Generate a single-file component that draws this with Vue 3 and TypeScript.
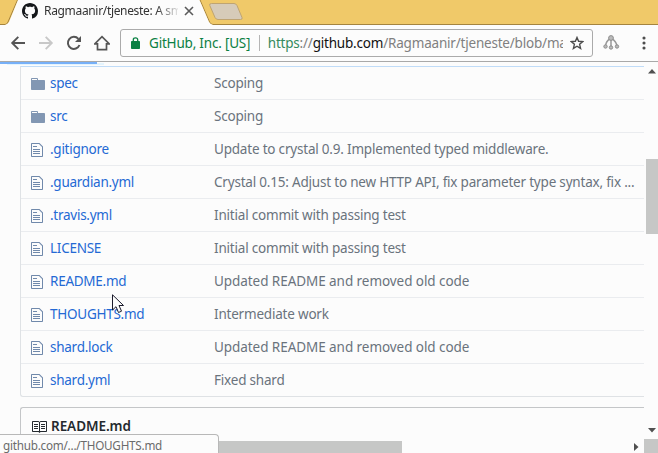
<script setup lang="ts">
interface Entry {
  name: string
  kind: 'dir' | 'file'
  message: string
}

const entries: Entry[] = [
  { name: 'spec', kind: 'dir', message: 'Scoping' },
  { name: 'src', kind: 'dir', message: 'Scoping' },
  { name: '.gitignore', kind: 'file', message: 'Update to crystal 0.9. Implemented typed middleware.' },
  { name: '.guardian.yml', kind: 'file', message: 'Crystal 0.15: Adjust to new HTTP API, fix parameter type syntax, fix ...' },
  { name: '.travis.yml', kind: 'file', message: 'Initial commit with passing test' },
  { name: 'LICENSE', kind: 'file', message: 'Initial commit with passing test' },
  { name: 'README.md', kind: 'file', message: 'Updated README and removed old code' },
  { name: 'THOUGHTS.md', kind: 'file', message: 'Intermediate work' },
  { name: 'shard.lock', kind: 'file', message: 'Updated README and removed old code' },
  { name: 'shard.yml', kind: 'file', message: 'Fixed shard' },
]
</script>

<template>
  <div class="browser">
    <header class="tabstrip">
      <svg class="tab-shape" width="658" height="25" viewBox="0 0 658 25">
        <path d="M0 24.500H5Q7 24.500 8 22L17.500 0H200L209.500 22Q210.500 24.500 213 24.500H658" fill="none" stroke="#a5843f" />
        <path d="M5 25Q8 24 9 22L18 0H199.500L209 22Q210 24 213 25Z" fill="#fcfcfc" />
        <path d="M211.500 3.500H234Q236 3.500 237 5.500L242 17.500Q242.800 19.500 240.500 19.500H218Q216 19.500 215 17.500L209.800 5.500Q209 3.500 211.500 3.500Z" fill="#d6cbb9" stroke="#bfa471" />
      </svg>
      <div class="tab">
        <svg class="favicon" width="16" height="16" viewBox="0 0 16 16"><path fill="#15181b" d="M8 0C3.580 0 0 3.580 0 8c0 3.540 2.290 6.530 5.470 7.590.4.070.55-.17.55-.38 0-.19-.01-.82-.01-1.490-2.010.37-2.530-.49-2.690-.94-.09-.23-.48-.94-.82-1.130-.28-.15-.68-.52-.01-.53.63-.01 1.080.58 1.230.82.72 1.210 1.870.87 2.330.66.070-.52.28-.87.51-1.070-1.780-.2-3.640-.89-3.640-3.950 0-.87.31-1.590.82-2.150-.08-.2-.36-1.020.08-2.120 0 0 .67-.21 2.200.82.64-.18 1.320-.27 2-.27s1.360.09 2 .27c1.530-1.040 2.200-.82 2.200-.82.44 1.100.16 1.920.08 2.120.51.56.82 1.270.82 2.150 0 3.070-1.870 3.750-3.650 3.950.29.25.54.73.54 1.480 0 1.070-.01 1.930-.01 2.200 0 .21.15.46.55.38A8.013 8.013 0 0 0 16 8c0-4.420-3.580-8-8-8z" /></svg>
        <span class="tab-title">Ragmaanir/tjeneste: A sm</span>
        <svg class="close" width="10" height="10" viewBox="0 0 10 10"><path d="M1 1L9 9M9 1L1 9" stroke="#5a5a5a" stroke-width="1.600" /></svg>
      </div>
    </header>

    <nav class="toolbar">
      <svg class="nav-icon" width="16" height="16" viewBox="0 0 16 16"><path d="M15 8H2.500M8.300 1.800L2.200 8L8.300 14.200" fill="none" stroke="#555" stroke-width="1.900" /></svg>
      <svg class="nav-icon" width="16" height="16" viewBox="0 0 16 16"><path d="M1 8H13.500M7.700 1.800L13.800 8L7.700 14.200" fill="none" stroke="#c8c8c8" stroke-width="1.900" /></svg>
      <svg class="nav-icon" width="16" height="16" viewBox="0 0 16 16"><path d="M13.500 10A6 6 0 1 1 12.400 3.900" fill="none" stroke="#555" stroke-width="2" /><path d="M15 1V7H9Z" fill="#555" /></svg>
      <svg class="nav-icon" width="16" height="16" viewBox="0 0 16 16"><path d="M.700 8.900H3.500V14.700H12.500V8.900H15.300L8 1.600Z" fill="none" stroke="#555" stroke-width="1.700" /></svg>
      <div class="omnibox">
        <svg class="lock" width="9" height="12" viewBox="0 0 9 12"><path d="M.500 4.500H8.500V11.500H.500Z" fill="#0b8043" stroke="#0b8043" stroke-linejoin="round" /><path d="M2.300 5V2.700Q2.300.8 4.500.8T6.700 2.700V5" fill="none" stroke="#0b8043" stroke-width="1.300" /></svg>
        <span class="issuer">GitHub, Inc. [US]</span>
        <span class="divider"></span>
        <span class="url"><span class="scheme">https</span>://<span class="host">github.com</span>/Ragmaanir/tjeneste/blob/ma</span>
        <svg class="star" width="14" height="14" viewBox="0 0 14 14"><path d="M7 1.500L8.600 5.300L12.800 5.600L9.600 8.300L10.600 12.400L7 10.200L3.400 12.400L4.400 8.300L1.200 5.600L5.400 5.300Z" fill="none" stroke="#4c4c4c" stroke-width="1.400" /></svg>
      </div>
      <svg class="extension" width="17" height="15" viewBox="0 0 17 15">
        <path d="M8 3V12M7 4Q3 6 2.500 11M9 4Q13 6 14 11" fill="none" stroke="#999" stroke-width="1.500" />
        <g fill="#bbb" stroke="#8e8e8e"><circle cx="8" cy="3" r="2.400" /><circle cx="2.500" cy="11.500" r="1.700" /><circle cx="8" cy="12.500" r="1.700" /><circle cx="14" cy="11.500" r="1.700" /></g>
      </svg>
      <svg class="menu" width="4" height="14" viewBox="0 0 4 14"><g fill="#4d4d4d"><circle cx="2" cy="2" r="1.550" /><circle cx="2" cy="7" r="1.550" /><circle cx="2" cy="12" r="1.550" /></g></svg>
    </nav>

    <div class="content">
      <main class="page">
        <section class="files">
          <div v-for="entry in entries" :key="entry.name" class="row">
            <span class="icon">
              <svg v-if="entry.kind === 'dir'" width="14" height="16" viewBox="0 0 14 16"><path fill="#8297b3" d="M13 4H7V3c0-.66-.31-1-1-1H1c-.55 0-1 .45-1 1v10c0 .55.45 1 1 1h12c.55 0 1-.45 1-1V5c0-.55-.45-1-1-1zM6 4H1V3h5v1z" /></svg>
              <svg v-else width="12" height="16" viewBox="0 0 12 16"><path fill="#7089ab" d="M6 5H2V4h4v1zM2 8h7V7H2v1zm0 2h7V9H2v1zm0 2h7v-1H2v1zm10-7.500V14c0 .55-.45 1-1 1H1c-.55 0-1-.45-1-1V2c0-.55.45-1 1-1h7.500L12 4.500zM11 5L8 2H1v12h10V5z" /></svg>
            </span>
            <span class="name">{{ entry.name }}</span>
            <span class="message" :class="{ wide: entry.message.includes('README') }">{{ entry.message }}</span>
          </div>
        </section>
        <section class="readme">
          <svg width="16" height="16" viewBox="0 0 16 16"><path fill="#24292e" d="M3 5h4v1H3V5zm0 3h4V7H3v1zm0 2h4V9H3v1zm11-5h-4v1h4V5zm0 2h-4v1h4V7zm0 2h-4v1h4V9zm2-6v9c0 .55-.45 1-1 1H9.500l-1 1-1-1H2c-.55 0-1-.45-1-1V3c0-.55.45-1 1-1h5.500l1 1 1-1H15c.55 0 1 .45 1 1zm-8 .5L7.500 3H2v9h6V3.500zm7-.5H9.500l-.5.5V12h6V3z" /></svg>
          <h3>README.md</h3>
        </section>
      </main>
      <aside class="vscroll">
        <svg width="8" height="5" viewBox="0 0 8 5"><path d="M4 0L8 4.500H0Z" fill="#505050" /></svg>
        <div class="vthumb"></div>
        <svg class="down" width="8" height="5" viewBox="0 0 8 5"><path d="M4 4.500L8 0H0Z" fill="#505050" /></svg>
      </aside>
      <div class="progress"></div>
      <div class="hscroll">
        <div class="hthumb"></div>
        <svg class="right" width="5" height="8" viewBox="0 0 5 8"><path d="M4.500 4L0 0V8Z" fill="#505050" /></svg>
        <div class="corner"></div>
      </div>
      <div class="status">github.com/.../THOUGHTS.md</div>
    </div>

    <svg class="cursor" width="13" height="20" viewBox="0 0 13 20"><path d="M.500.800V16L4 12.700L6.500 18.500L9.500 17.200L7 11.500H11.500Z" fill="#fcfcfc" stroke="#1b1b2c" stroke-width="1" /></svg>
  </div>
</template>

<style>
body {
  margin: 0;
  overflow: hidden;
}
</style>

<style scoped>
.browser {
  position: relative;
  display: flex;
  flex-direction: column;
  width: 658px;
  height: 453px;
  overflow: hidden;
  background: #fcfcfc;
  font-family: "Noto Sans", "Open Sans", sans-serif;
  font-size: 13.5px;
  letter-spacing: -0.2px;
  white-space: nowrap;
}
svg {
  display: block;
  flex: none;
}
.tabstrip {
  position: relative;
  flex: none;
  height: 25px;
  background: #f0c969;
}
.tab-shape {
  position: absolute;
  inset: 0;
}
.tab {
  position: relative;
  display: flex;
  align-items: flex-start;
  padding-left: 22px;
}
.favicon {
  margin-top: 3px;
}
.tab-title {
  width: 134px;
  margin: 2px 6px 0 6px;
  overflow: hidden;
  color: #333;
  font-size: 12px;
  letter-spacing: -0.33px;
  line-height: 18px;
  mask-image: linear-gradient(90deg, #000 112px, transparent 137px);
}
.close {
  margin-top: 6px;
}
.toolbar {
  display: flex;
  flex: none;
  box-sizing: border-box;
  height: 37px;
  padding: 4px 12px 0 10px;
  border-bottom: 1px solid #a9a9a9;
}
.nav-icon {
  margin: 6px 12px 0 0;
}
.omnibox {
  display: flex;
  box-sizing: border-box;
  width: 473px;
  height: 28px;
  margin-left: -2px;
  padding: 0 8px 0 10px;
  border: 1px solid #aaa;
  border-radius: 3px;
  line-height: 26px;
}
.lock {
  margin-top: 7px;
}
.issuer {
  width: 102px;
  margin-left: 9px;
  color: #0b8043;
}
.divider {
  width: 1px;
  height: 16px;
  margin: 5px 8px 0 8px;
  background: #b5b5b5;
}
.url {
  width: 296px;
  overflow: hidden;
  color: #808080;
}
.scheme {
  color: #348a5e;
}
.host {
  color: #111;
}
.star {
  margin: 6px 0 0 7px;
}
.extension {
  margin: 6px 0 0 10px;
}
.menu {
  margin: 7px 0 0 22px;
}
.content {
  position: relative;
  display: flex;
  flex: 1;
  min-height: 0;
  overflow: hidden;
}
.page {
  width: 624px;
  padding: 4px 0 0 20px;
}
.files {
  border: solid #dfe2e5;
  border-width: 1px 0 1px 1px;
  border-top-color: #c0dcf8;
  border-bottom-left-radius: 3px;
}
.row {
  display: flex;
  box-sizing: border-box;
  height: 33px;
  padding-left: 10px;
  border-bottom: 1px solid #eaecef;
  line-height: 32px;
}
.row:last-child {
  height: 32px;
  border-bottom: 0;
}
.icon {
  flex: none;
  width: 19px;
  padding-top: 9px;
}
.name {
  flex: none;
  width: 164px;
  color: #2469d4;
  letter-spacing: -0.26px;
}
.message {
  color: #6a737d;
}
.message.wide {
  letter-spacing: -0.06px;
}
.readme {
  display: flex;
  box-sizing: border-box;
  height: 60px;
  margin-top: 10px;
  padding: 11px 0 0 10px;
  border: solid #c4c6c8;
  border-width: 1px 0 0 1px;
  border-radius: 3px 0 0;
}
h3 {
  margin: -3px 0 0 4px;
  color: #24292e;
  font-size: 13.5px;
  font-weight: 600;
  letter-spacing: -0.05px;
  line-height: 20px;
}
.vscroll {
  display: flex;
  flex-direction: column;
  align-items: flex-end;
  width: 14px;
  padding-top: 7px;
}
.vscroll svg {
  margin-right: 2px;
}
.vthumb {
  width: 12px;
  height: 75px;
  margin-top: 85px;
  background: #c6c7c6;
}
.vscroll .down {
  margin-top: 194px;
}
.progress {
  position: absolute;
  top: 0;
  left: 0;
  width: 97px;
  height: 2px;
  background: #77b0f8;
  box-shadow: 7px 1px 0 #e4f4fd;
}
.hscroll {
  position: absolute;
  right: 0;
  bottom: 0;
  left: 0;
  display: flex;
  height: 12px;
  background: #fcfcfc;
}
.hthumb {
  width: 402px;
  background: #c6c7c6;
}
.right {
  margin: 2px 5px 0 auto;
}
.corner {
  width: 14px;
  height: 14px;
  margin-top: -2px;
  background: #c6c7c6;
}
.status {
  position: absolute;
  bottom: 0;
  left: 0;
  box-sizing: border-box;
  width: 219px;
  height: 19px;
  padding-left: 3px;
  border: solid #b8b8b8;
  border-width: 1px 1px 0 0;
  border-radius: 0 4px 0 0;
  background: #fcfcfc;
  color: #6b6b6b;
  font-size: 11.7px;
  letter-spacing: -0.23px;
  line-height: 21px;
}
.cursor {
  position: absolute;
  top: 294px;
  left: 112px;
}
</style>
